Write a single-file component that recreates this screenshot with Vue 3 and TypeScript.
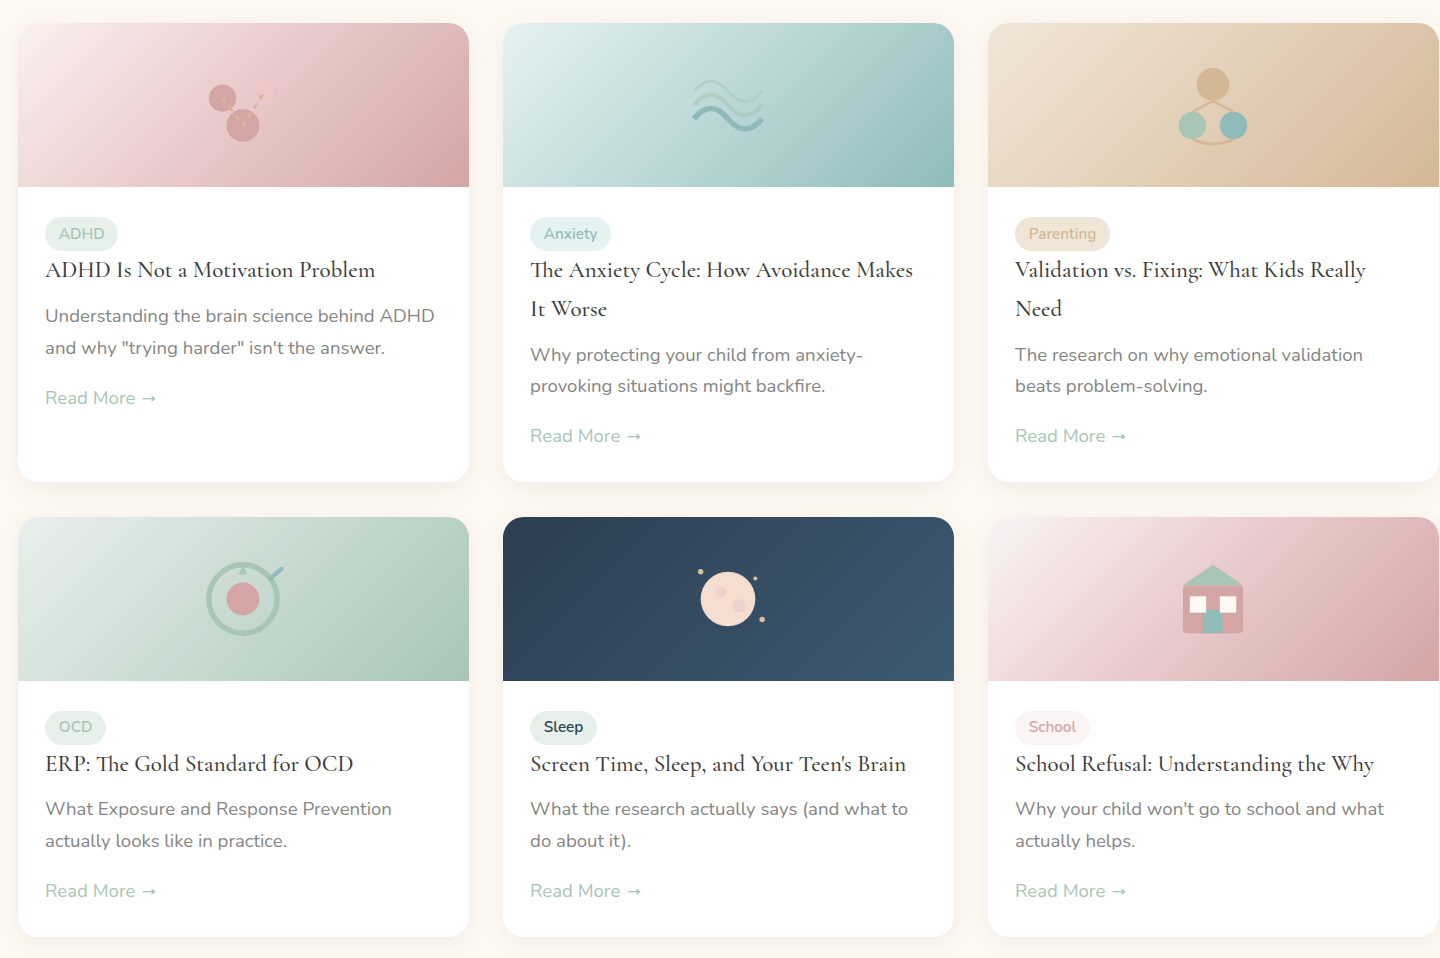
<script setup lang="ts">
defineOptions({
  name: 'ArticleGrid',
})

interface Article {
  id: string
  tag: string
  title: string
  excerpt: string
}

const articles: Article[] = [
  {
    id: 'adhd',
    tag: 'ADHD',
    title: 'ADHD Is Not a Motivation Problem',
    excerpt: 'Understanding the brain science behind ADHD and why "trying harder" isn\'t the answer.',
  },
  {
    id: 'anxiety',
    tag: 'Anxiety',
    title: 'The Anxiety Cycle: How Avoidance Makes It Worse',
    excerpt: 'Why protecting your child from anxiety-provoking situations might backfire.',
  },
  {
    id: 'parenting',
    tag: 'Parenting',
    title: 'Validation vs. Fixing: What Kids Really Need',
    excerpt: 'The research on why emotional validation beats problem-solving.',
  },
  {
    id: 'ocd',
    tag: 'OCD',
    title: 'ERP: The Gold Standard for OCD',
    excerpt: 'What Exposure and Response Prevention actually looks like in practice.',
  },
  {
    id: 'sleep',
    tag: 'Sleep',
    title: 'Screen Time, Sleep, and Your Teen\'s Brain',
    excerpt: 'What the research actually says (and what to do about it).',
  },
  {
    id: 'school',
    tag: 'School',
    title: 'School Refusal: Understanding the Why',
    excerpt: 'Why your child won\'t go to school and what actually helps.',
  },
]
</script>

<template>
  <main class="article-grid">
    <article v-for="item in articles" :key="item.id" class="card" :class="item.id">
      <div class="card-image">
        <svg class="icon" viewBox="0 0 60 60">
          <g v-if="item.id === 'adhd'">
            <circle cx="15" cy="25" r="10" fill="#d4a5a5" />
            <circle cx="45" cy="20" r="8" fill="#f2c6c6" opacity="0.6" />
            <circle cx="30" cy="45" r="12" fill="#d4a5a5" />
            <path d="M15 25L30 45L46 20" fill="none" stroke="#d4b896" stroke-width="2" stroke-dasharray="4 4" />
          </g>
          <g v-else-if="item.id === 'anxiety'" fill="none">
            <path d="M5 40Q17.5 25 30 40T55 40" stroke="#8fbcbb" stroke-width="4" />
            <path d="M5 30Q17.5 15 30 30T55 30" stroke="#a8c5b5" stroke-width="3" opacity="0.6" />
            <path d="M5 20Q17.5 5 30 20T55 20" stroke="#a8c5b5" stroke-width="2" opacity="0.5" />
          </g>
          <g v-else-if="item.id === 'parenting'">
            <circle cx="30" cy="15" r="12" fill="#d4b896" />
            <circle cx="15" cy="45" r="10" fill="#a8c5b5" />
            <circle cx="45" cy="45" r="10" fill="#8fbcbb" />
            <path d="M30 27L15 35M30 27L45 35M15 55Q30 62 45 55" fill="none" stroke="#d4b896" stroke-width="2" />
          </g>
          <g v-else-if="item.id === 'ocd'">
            <circle cx="30" cy="30" r="25" fill="none" stroke="#a8c5b5" stroke-width="4" />
            <circle cx="30" cy="30" r="12" fill="#d4a5a5" />
            <path d="M30 5L33 12H27Z" fill="#a8c5b5" />
            <path d="M50 15L58.3 8" stroke="#8fbcbb" stroke-width="3" stroke-linecap="round" />
          </g>
          <g v-else-if="item.id === 'sleep'">
            <circle cx="30" cy="30" r="20" fill="#f5ddd0" />
            <circle cx="25" cy="25" r="4" fill="#e8c9c9" opacity="0.6" />
            <circle cx="38" cy="35" r="5" fill="#e8c9c9" opacity="0.6" />
            <circle cx="10" cy="10" r="2" fill="#d4c3a0" />
            <circle cx="50" cy="15" r="1.5" fill="#d4c3a0" />
            <circle cx="55" cy="45" r="2" fill="#d4c3a0" />
          </g>
          <g v-else>
            <rect x="8" y="20" width="44" height="35" rx="3" fill="#d4a5a5" />
            <path d="M8 20L30 5L52 20Z" fill="#a8c5b5" />
            <rect x="23" y="38" width="14" height="17" fill="#8fbcbb" />
            <rect x="13" y="28" width="12" height="12" fill="#fef9f5" />
            <rect x="35" y="28" width="12" height="12" fill="#fef9f5" />
          </g>
        </svg>
      </div>
      <div class="card-content">
        <span class="tag">{{ item.tag }}</span>
        <h3>{{ item.title }}</h3>
        <p>{{ item.excerpt }}</p>
        <a class="read-more">Read More <span class="arrow">→</span></a>
      </div>
    </article>
  </main>
</template>

<style>
body {
  background: #fef9f3;
  overflow: hidden;
}
</style>

<style scoped>
.article-grid {
  box-sizing: border-box;
  display: grid;
  grid-template-columns: repeat(3, 450.8px);
  grid-template-rows: 459.1px 420.7px;
  gap: 34.2px;
  height: 958px;
  padding: 23.3px 0 0 17.8px;
  overflow: hidden;
  font-family: Nunito, Lato, sans-serif;
}

.card {
  display: flex;
  flex-direction: column;
  overflow: hidden;
  background: #fff;
  border-radius: 20.5px;
  box-shadow: 0 5.5px 27.3px rgb(74 63 63 / 8%);
}

.card-image {
  display: flex;
  flex: none;
  align-items: center;
  justify-content: center;
  height: 164px;
}

.icon {
  width: 82px;
  height: 82px;
  overflow: visible;
}

.card-content {
  display: flex;
  flex-direction: column;
  align-items: flex-start;
  padding: 30.2px 27.3px 27.3px;
}

.tag {
  padding: 0.6px 13.7px 0;
  border-radius: 20.5px;
  background: #e8f0ec;
  color: #a8c5b5;
  font-size: 15.3px;
  font-weight: 600;
  line-height: 33.2px;
  white-space: nowrap;
}

h3 {
  margin: 0.2px 0 11.1px;
  color: #3d3d3d;
  font-family: "Cormorant Garamond", "Liberation Serif", serif;
  font-size: 22.96px;
  font-weight: 500;
  line-height: 38.48px;
}

p {
  margin: 0 0 16.7px;
  color: #858585;
  font-size: 18.59px;
  line-height: 31.6px;
}

.read-more {
  color: #a8c5b5;
  font-size: 18.59px;
  line-height: 34.8px;
}

.arrow {
  margin-left: -1.3px;
  font-family: "Liberation Sans", sans-serif;
  font-size: 20.5px;
  line-height: 1;
  vertical-align: 2px;
  -webkit-text-stroke: 0.4px currentcolor;
}

.adhd .card-image { background: linear-gradient(135deg, #faf0f0 0%, #e8c9c9 50%, #d4a5a5 100%); }
.anxiety .card-image { background: linear-gradient(135deg, #e5f2f1 0%, #8fbcbb 100%); }
.parenting .card-image { background: linear-gradient(135deg, #f0e6d8 0%, #d4b896 100%); }
.ocd .card-image { background: linear-gradient(135deg, #e8f0ec 0%, #a8c5b5 100%); }
.sleep .card-image { background: linear-gradient(135deg, #2c3e50 0%, #3d5a73 100%); }
.school .card-image { background: linear-gradient(135deg, #faf4f4 0%, #e8c9c9 50%, #d4a5a5 100%); }

.anxiety .tag { background: #e5f2f2; color: #8fbcbb; }
.parenting .tag { background: #f0e6d8; color: #d4b896; }
.sleep .tag { color: #2c3e50; }
.school .tag { background: #faf4f4; color: #d4a5a5; }
</style>
